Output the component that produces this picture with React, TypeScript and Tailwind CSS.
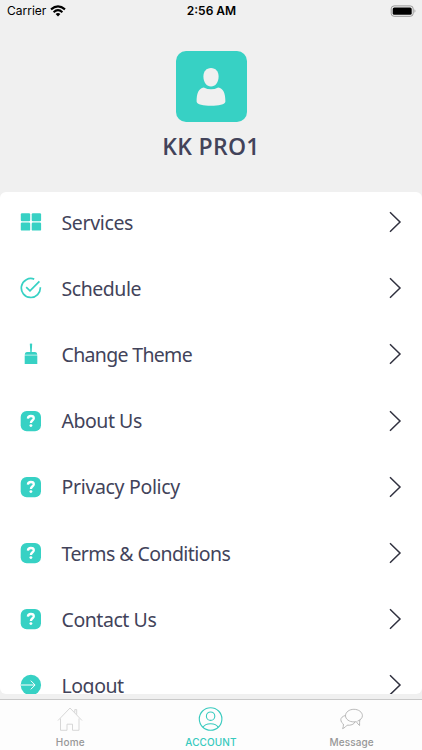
import { ReactNode } from "react";

const ServicesIcon = () => (
    <svg width="22" height="22" viewBox="0 0 22 22" fill="#37d1c4">
        <rect x=".8" y="2.3" width="9.4" height="8" rx="1.2" />
        <rect x="11.7" y="2.3" width="9.4" height="8" rx="1.2" />
        <rect x=".8" y="11.6" width="9.4" height="8" rx="1.2" />
        <rect x="11.7" y="11.6" width="9.4" height="8" rx="1.2" />
    </svg>
)

const ScheduleIcon = () => (
    <svg width="22" height="22" viewBox="0 0 22 22" fill="none" stroke="#37d1c4" strokeWidth="1.7">
        <path d="M14.2 2.1 A9.5 9.5 0 1 0 20.3 10.2" />
        <path d="M6.2 10.1 L10 13.8 L19.4 4.3" />
    </svg>
)

const BrushIcon = () => (
    <svg width="22" height="22" viewBox="0 0 22 22" fill="#37d1c4">
        <path d="M9.8 .8 Q11 .2 12.2 .8 L11.7 9 H15.2 Q17.2 9 17.3 11.7 H4.7 Q4.8 9 6.8 9 H10.3 Z" />
        <path d="M4.7 12.4 H17.3 V21 H4.7 Z" />
    </svg>
)

const HelpIcon = () => (
    <svg width="22" height="22" viewBox="0 0 22 22">
        <rect x=".7" y=".9" width="20.3" height="20.3" rx="6" fill="#37d1c4" />
        <path d="M7.9 8.6 C8 6.7 9.2 6 10.9 6 C12.7 6 13.8 6.9 13.8 8.3 C13.8 10.3 10.9 10.3 10.9 13" fill="none" stroke="white" strokeWidth="2.3" />
        <circle cx="10.9" cy="15.6" r="1.45" fill="white" />
    </svg>
)

const LogoutIcon = () => (
    <svg width="22" height="22" viewBox="0 0 22 22">
        <circle cx="10.9" cy="11" r="10.2" fill="#37d1c4" />
        <path d="M1 11 H15 M10.8 6.7 L15.1 11 L10.8 15.3" fill="none" stroke="white" strokeWidth="1" />
    </svg>
)

const items: { label: string; icon: ReactNode; spacing: string }[] = [
    { label: "Services", icon: <ServicesIcon />, spacing: "tracking-[-0.35px]" },
    { label: "Schedule", icon: <ScheduleIcon />, spacing: "tracking-[-0.45px]" },
    { label: "Change Theme", icon: <BrushIcon />, spacing: "tracking-[-0.67px]" },
    { label: "About Us", icon: <HelpIcon />, spacing: "tracking-[-0.47px]" },
    { label: "Privacy Policy", icon: <HelpIcon />, spacing: "tracking-[-0.33px]" },
    { label: "Terms & Conditions", icon: <HelpIcon />, spacing: "tracking-[-0.57px]" },
    { label: "Contact Us", icon: <HelpIcon />, spacing: "tracking-[-0.44px]" },
    { label: "Logout", icon: <LogoutIcon />, spacing: "tracking-[-0.45px]" },
]

const StatusBar = () => (
    <div className="grid grid-cols-3 items-center h-[22px] pl-[7px] pr-[6px] text-[12px] text-black">
        <div className="flex items-center gap-[4px]">
            <span>Carrier</span>
            <svg width="16" height="12" viewBox="0 0 16 12" fill="none" stroke="black" strokeWidth="2.1">
                <path d="M1 4.4 Q8 -1.8 15 4.4" />
                <path d="M3.6 7.2 Q8 3.2 12.4 7.2" />
                <path d="M8 11.5 L5.6 9.1 Q8 7.1 10.4 9.1 Z" fill="black" stroke="none" />
            </svg>
        </div>
        <span className="text-center font-semibold whitespace-nowrap">2:56 AM</span>
        <svg className="justify-self-end" width="26" height="12" viewBox="0 0 26 12">
            <rect x="1.2" y=".9" width="22" height="10.4" rx="2.9" fill="none" stroke="#999" />
            <rect x="2.7" y="2.4" width="19" height="7.4" rx="1.6" fill="black" />
            <path d="M24.5 4.3 Q26.3 6 24.5 7.8 Z" fill="#999" />
        </svg>
    </div>
)

const App = () => {
    return (
        <div className="flex flex-col h-[750px] w-[422px] overflow-hidden bg-[#f0f0f0] font-['Inter',sans-serif]">
            <StatusBar />
            <div className="flex flex-col items-center h-[170px] pt-[29px]">
                <div className="flex items-center justify-center size-[71px] rounded-[10px] bg-[#37d1c4]">
                    <svg width="30" height="38" viewBox="0 0 30 38" fill="#f0f0f0">
                        <path d="M15 0 C19.7 0 22.6 3.5 22.6 8.5 C22.6 14.5 19.3 18.5 15 18.5 C10.7 18.5 7.4 14.5 7.4 8.5 C7.4 3.5 10.3 0 15 0 Z" />
                        <path d="M7.8 19.5 Q15 23.2 22.2 19.5 C27.5 20.4 29.4 25.5 29.4 33.5 C29.4 39.3 .6 39.3 .6 33.5 C.6 25.5 2.5 20.4 7.8 19.5 Z" />
                    </svg>
                </div>
                <h1 className="mt-[8px] font-['Open_Sans',sans-serif] text-[23px] leading-[32px] tracking-[0.3px] font-semibold text-[#42435a] whitespace-nowrap">KK PRO1</h1>
            </div>
            <div className="h-[502px] overflow-hidden rounded-[6px] bg-white">
                <ul className="-mt-[3px]">
                    {items.map((item) => (
                        <li key={item.label} className="flex items-center h-[66.2px] px-[20px]">
                            {item.icon}
                            <span className={`ml-[19.5px] pt-[1px] flex-1 font-['Noto_Sans',sans-serif] text-[19.5px] leading-[28px] whitespace-nowrap text-[#42435a] ${item.spacing}`}>{item.label}</span>
                            <svg width="14" height="22" viewBox="0 0 14 22" fill="none" stroke="#30313f" strokeWidth="1.5">
                                <path d="M2 1.3 L12 11 L2 20.7" />
                            </svg>
                        </li>
                    ))}
                </ul>
            </div>
            <nav className="mt-[5px] grid grid-cols-3 h-[51px] border-t border-[#c9c9c9] bg-[#fdfdfd] text-[10px] leading-[12px] font-medium text-[#979797]">
                <div className="flex flex-col items-center pt-[6px]">
                    <svg width="26" height="26" viewBox="0 0 26 26" fill="none" stroke="#d2d2d2" strokeWidth=".9">
                        <path d="M1 14.5 L13 2 L25 14.5 M3.5 12.5 V24.3 H10 V18.2 H15.5 V24.3 H22 V12.5 M17.8 6.6 V3.6 H19.7 V8.7" />
                    </svg>
                    <span className="mt-[4px] tracking-[0.2px]">Home</span>
                </div>
                <div className="flex flex-col items-center pt-[6px] text-[#37cabe]">
                    <svg width="26" height="26" viewBox="0 0 26 26" fill="none" stroke="currentColor" strokeWidth="1.1">
                        <circle cx="12.6" cy="13" r="11.3" />
                        <circle cx="12.6" cy="10.2" r="4.2" />
                        <path d="M5.1 21.3 C7.6 16.5 17.6 16.5 20.1 21.3" />
                    </svg>
                    <span className="mt-[4px] tracking-[0.1px]">ACCOUNT</span>
                </div>
                <div className="flex flex-col items-center pt-[6px]">
                    <svg width="26" height="26" viewBox="0 0 26 26" fill="none" stroke="#a8a8a8" strokeWidth=".8">
                        <path d="M18.4 15.2 C21.6 14 23.4 12 23.4 9.7 C23.4 6.2 19.6 3.3 14.9 3.3 C10.2 3.3 6.5 6.2 6.5 9.7 C6.5 13.2 10.2 15.9 14.9 15.9 Q16.1 15.9 17.3 15.6 Q18.6 18.1 20.6 19.5 Q20.4 16.5 20.9 13.6" />
                        <path d="M6.5 9.4 C3.4 10.4 1.8 11.8 1.8 13.8 Q1.8 16.4 4.4 18 Q4.6 20.5 3.6 22.7 Q6.4 21.5 8.1 19.2 C11.7 19.5 15.1 18.5 15.9 16" />
                    </svg>
                    <span className="mt-[4px] tracking-[0.1px]">Message</span>
                </div>
            </nav>
        </div>
    )
}
export default App
